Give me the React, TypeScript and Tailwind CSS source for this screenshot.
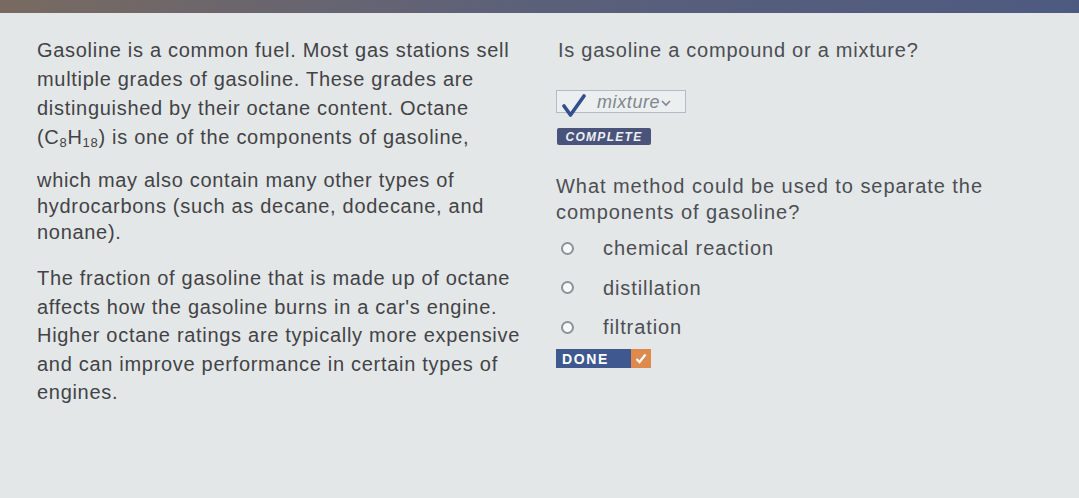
import React from "react"

const Radio = ({ label }: { label: string }) => (
	<label className="flex items-center h-[20px]">
		<span className="w-[13px] h-[13px] rounded-full border-2 border-[#8d9298] bg-[#f7f8f8] ml-[5px] mr-[29px]" />
		<span>{label}</span>
	</label>
)

export default function App() {
	return (
		<div
			className="w-[1079px] h-[498px] bg-[#e4e7e8] text-[#424346] overflow-hidden tracking-[0.7px]"
			style={{ fontFamily: '"Liberation Sans", Arial, sans-serif' }}
		>
			<div className="h-[13px] bg-gradient-to-r from-[#786a60] via-[#5b607a] to-[#4d5a80]" />
			<div className="flex pt-[23px]">
				<div className="w-[556px] shrink-0 pl-[37px] text-[20px] whitespace-nowrap">
					<div className="leading-[29px]">
						<div>Gasoline is a common fuel. Most gas stations sell</div>
						<div>multiple grades of gasoline. These grades are</div>
						<div>distinguished by their octane content. Octane</div>
						<div>
							(C<sub className="text-[13px] leading-none">8</sub>H
							<sub className="text-[13px] leading-none">18</sub>) is one of the components of gasoline,
						</div>
					</div>
					<div className="mt-[15px] leading-[26px]">
						<div>which may also contain many other types of</div>
						<div>hydrocarbons (such as decane, dodecane, and</div>
						<div>nonane).</div>
					</div>
					<div className="mt-[19px] leading-[28.5px]">
						<div>The fraction of gasoline that is made up of octane</div>
						<div>affects how the gasoline burns in a car's engine.</div>
						<div>Higher octane ratings are typically more expensive</div>
						<div>and can improve performance in certain types of</div>
						<div>engines.</div>
					</div>
				</div>
				<div className="flex-1 text-[20px] whitespace-nowrap text-[#4b4e53]">
					<div className="leading-[28px] pl-[2px] tracking-[0.75px]">Is gasoline a compound or a mixture?</div>
					<div className="mt-[26px] flex flex-col items-start">
						<div className="relative flex items-center h-[23px] w-[130px] border border-[#b6bbc0] bg-[#eceff0] pl-[28px] pr-[3px]">
							<svg width="24" height="24" viewBox="0 0 24 24" className="absolute left-[5px] top-[3px]">
								<path d="M2 12 L8.5 21 L22 2" fill="none" stroke="#30508e" strokeWidth="3.6" strokeLinecap="round" strokeLinejoin="round" />
							</svg>
							<span className="italic text-[18px] tracking-[0.6px] text-[#80868c] ml-[12px] leading-none">mixture</span>
							<svg width="10" height="8" viewBox="0 0 10 8" className="ml-[1px] mt-[2px]">
								<path d="M1 2 L5 6 L9 2" fill="none" stroke="#80868c" strokeWidth="1.6" />
							</svg>
						</div>
						<div className="mt-[15px] ml-[1px] h-[17px] w-[94px] bg-[#4a5379] rounded-[2px] flex items-center justify-center">
							<span className="text-[#eef0f6] text-[12px] font-bold italic tracking-[1.3px] leading-none">COMPLETE</span>
						</div>
					</div>
					<div className="mt-[28px] leading-[26px] tracking-[0.95px]">
						<div>What method could be used to separate the</div>
						<div>components of gasoline?</div>
					</div>
					<div className="mt-[13px] flex flex-col gap-[19.5px] tracking-[0.9px]">
						<Radio label="chemical reaction" />
						<Radio label="distillation" />
						<Radio label="filtration" />
					</div>
					<div className="mt-[12px] flex h-[19px] w-[95px]">
						<div className="flex-1 bg-[#3f5890] flex items-center pl-[6px]">
							<span className="text-white text-[14px] font-bold tracking-[1.6px] leading-none">DONE</span>
						</div>
						<div className="w-[20px] bg-[#de8a4c] flex items-center justify-center">
							<svg width="12" height="11" viewBox="0 0 12 11">
								<path d="M1.5 6 L4.5 9 L10.5 1.5" fill="none" stroke="#fff" strokeWidth="2.2" />
							</svg>
						</div>
					</div>
				</div>
			</div>
		</div>
	)
}
